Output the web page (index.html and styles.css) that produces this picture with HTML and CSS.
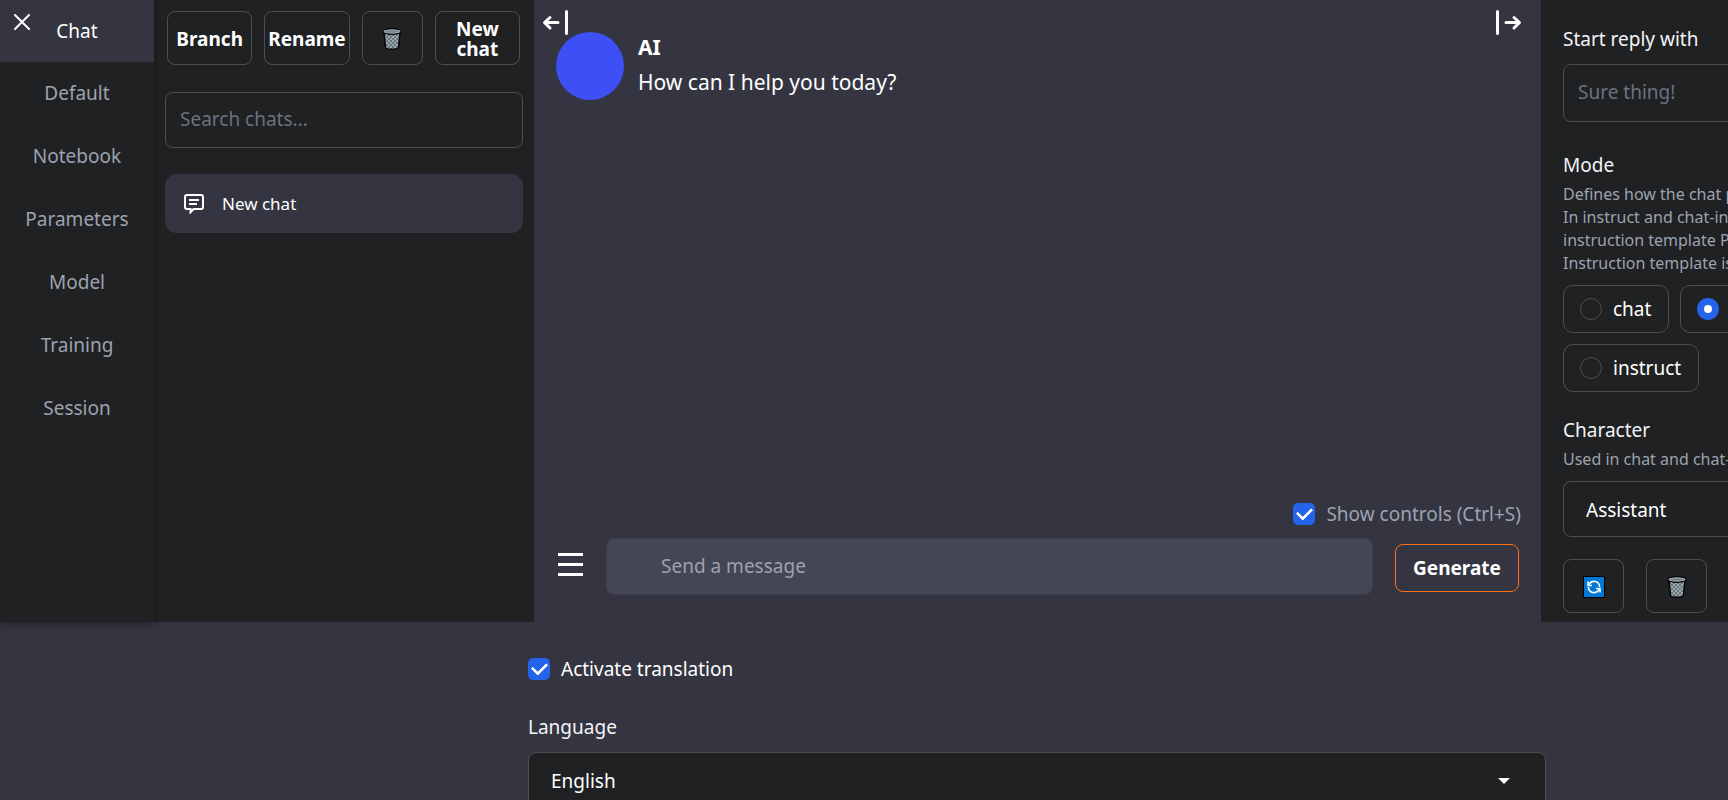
FILE: index.html
```
<!DOCTYPE html>
<html lang="en">
<head>
  <meta charset="UTF-8">
  <title>Text generation web UI</title>
  <meta name="viewport" content="width=device-width, initial-scale=1">
  <link rel="stylesheet" href="styles.css">
</head>
<body>

  <div class="app">
    <nav class="tabs">
      <button class="tab active">Chat</button>
      <button class="tab">Default</button>
      <button class="tab">Notebook</button>
      <button class="tab">Parameters</button>
      <button class="tab">Model</button>
      <button class="tab">Training</button>
      <button class="tab">Session</button>
      <button class="close-nav" aria-label="Close navigation">
        <svg width="16" height="16" viewBox="0 0 16 16"><path d="M1 1l14 14M15 1L1 15"/></svg>
      </button>
    </nav>

    <aside class="past-chats">
      <div class="chat-actions">
        <button class="btn">Branch</button>
        <button class="btn">Rename</button>
        <button class="btn btn-icon" aria-label="Delete chat">
          <svg class="trash" width="20" height="22" viewBox="0 0 20 22"><use href="#trash"/></svg>
        </button>
        <button class="btn">New chat</button>
      </div>
      <input class="field search" type="text" placeholder="Search chats..." aria-label="Search chats">
      <a class="chat-item" href="#">
        <svg width="20" height="20" viewBox="0 0 20 20"><path d="M3 1h14a2 2 0 0 1 2 2v10a2 2 0 0 1-2 2H9.500l-3 3.300V15H3a2 2 0 0 1-2-2V3a2 2 0 0 1 2-2zM5 6h10M5 10h8"/></svg>
        New chat
      </a>
    </aside>

    <main class="chat">
      <button class="toggle toggle-left" aria-label="Hide past chats">
        <svg width="26" height="26" viewBox="0 0 26 26"><path d="M16 12.500H3M8 7.500l-5.500 5 5.500 5.500M24.500 1.500v22"/></svg>
      </button>
      <button class="toggle toggle-right" aria-label="Hide controls">
        <svg width="26" height="26" viewBox="0 0 26 26"><path d="M10 12.500h13M18 7.500l5.500 5-5.500 5.500M1.500 1.500v22"/></svg>
      </button>

      <div class="message">
        <div class="avatar"></div>
        <div class="message-text">
          <div class="name">AI</div>
          <p>How can I help you today?</p>
        </div>
      </div>

      <label class="check show-controls">
        <input type="checkbox" checked>
        Show controls (Ctrl+S)
      </label>
      <div class="composer">
        <button class="menu" aria-label="Menu"><span></span><span></span><span></span></button>
        <textarea rows="1" placeholder="Send a message" aria-label="Message"></textarea>
        <button class="btn generate">Generate</button>
      </div>
    </main>

    <aside class="controls">
      <div class="controls-inner">
        <label class="title" for="start-with">Start reply with</label>
        <input class="field start-with" id="start-with" type="text" placeholder="Sure thing!">

        <div class="title">Mode</div>
        <p class="info">
          Defines how the chat prompt is generated.<br>
          In instruct and chat-instruct modes, the<br>
          instruction template Parameters &gt;<br>
          Instruction template is used.
        </p>
        <div class="modes">
          <label><input type="radio" name="mode">chat</label>
          <label><input type="radio" name="mode" checked>chat-instruct</label>
          <label><input type="radio" name="mode">instruct</label>
        </div>

        <label class="title" for="character">Character</label>
        <p class="info">Used in chat and chat-instruct modes.</p>
        <select class="field" id="character">
          <option>Assistant</option>
        </select>
        <div class="character-actions">
          <button class="btn btn-icon" aria-label="Refresh">
            <svg width="22" height="22" viewBox="0 0 22 22">
              <rect width="22" height="22" rx="1" fill="#000"/>
              <rect x="1" y="1" width="20" height="20" fill="#0078d7"/>
              <path d="M6 8.500A5.600 5.600 0 0 1 16.600 11M16 13.500A5.600 5.600 0 0 1 5.400 11M5 5.500v4h4M17 16.500v-4h-4" fill="none" stroke="#fff" stroke-width="1.600"/>
            </svg>
          </button>
          <button class="btn btn-icon" aria-label="Delete character">
            <svg class="trash" width="20" height="22" viewBox="0 0 20 22"><use href="#trash"/></svg>
          </button>
        </div>
      </div>
    </aside>
  </div>

  <section class="translation">
    <label class="check">
      <input type="checkbox" checked>
      Activate translation
    </label>
    <label class="title" for="language">Language</label>
    <div class="select-wrap">
      <select class="field" id="language">
        <option>English</option>
      </select>
    </div>
  </section>

  <svg width="0" height="0" class="defs">
    <defs>
      <pattern id="mesh" width="4" height="4" patternUnits="userSpaceOnUse">
        <rect width="4" height="4" fill="#9aa7ae"/>
        <path d="M0 0h2v2H0zM2 2h2v2H2z" fill="#69757b"/>
      </pattern>
      <symbol id="trash" viewBox="0 0 20 22">
        <path d="M2 4l1.500 15c.2 1.500 2 2.300 6.500 2.300s6.300-.8 6.500-2.300L18 4z" fill="url(#mesh)" stroke="#000" stroke-width="1.400"/>
        <ellipse cx="10" cy="3.500" rx="9.200" ry="2.800" fill="#a9b5bb" stroke="#000" stroke-width="1.200"/>
        <ellipse cx="10" cy="3.500" rx="7" ry="1.300" fill="#77848b"/>
      </symbol>
    </defs>
  </svg>

</body>
</html>
```

FILE: styles.css
```
* {
  box-sizing: border-box;
}

html {
  scrollbar-width: none;
}

body {
  margin: 0;
  min-height: 100vh;
  background: #343541;
  color: #fff;
  font: 19px/28px "Noto Sans", sans-serif;
  overflow-x: hidden;
}

button,
input,
select,
textarea {
  font: inherit;
  color: inherit;
}

button {
  padding: 0;
  border: 0;
  background: none;
  cursor: pointer;
}

svg {
  display: block;
}

p {
  margin: 0;
}

.app {
  display: flex;
  height: 622px;
}

/* navigation */

.tabs {
  position: relative;
  z-index: 1;
  flex: 0 0 154px;
  display: flex;
  flex-direction: column;
  background: #202123;
  box-shadow: 0 2px 6px rgba(0, 0, 0, .4);
}

.tab {
  height: 63px;
  padding-bottom: 1px;
  color: #9ca3af;
}

.tab.active {
  height: 62px;
  padding: 0;
  background: #343541;
  color: #fff;
}

.close-nav {
  position: absolute;
  top: 14px;
  left: 14px;
}

.close-nav svg {
  fill: none;
  stroke: #fff;
  stroke-width: 2;
  stroke-linecap: round;
}

/* past chats */

.past-chats {
  flex: 0 0 380px;
  padding: 11px;
  background: #202123;
}

.chat-actions {
  display: flex;
  gap: 12px;
  padding: 0 3px 0 2px;
}

.btn {
  display: flex;
  align-items: center;
  justify-content: center;
  flex: 1 1 0;
  min-width: 0;
  height: 54px;
  padding-top: 2px;
  border: 1px solid #4d4e50;
  border-radius: 8px;
  font-weight: 700;
  line-height: 20px;
}

.btn-icon {
  flex: 0 0 61px;
}

.field {
  display: block;
  width: 100%;
  height: 56px;
  padding: 0 14px 2px;
  border: 1px solid #4d4e50;
  border-radius: 8px;
  background: #202123;
}

.field::placeholder {
  color: #6b7280;
}

.search {
  margin: 27px 0 26px;
}

.chat-item {
  display: flex;
  align-items: center;
  gap: 18px;
  height: 59px;
  padding: 0 19px;
  border-radius: 12px;
  background: #343541;
  color: #fff;
  font-size: 17px;
  text-decoration: none;
}

.chat-item svg {
  fill: none;
  stroke: #fff;
  stroke-width: 2;
}

/* chat */

.chat {
  position: relative;
  flex: 1;
  min-width: 0;
  display: flex;
  flex-direction: column;
  padding: 32px 20px 27px 22px;
}

.toggle {
  position: absolute;
  top: 10px;
}

.toggle-left {
  left: 8px;
}

.toggle-right {
  right: 19px;
}

.toggle svg {
  fill: none;
  stroke: #fff;
  stroke-width: 3;
  stroke-linecap: round;
  stroke-linejoin: round;
}

.message {
  display: flex;
  gap: 14px;
  margin-bottom: auto;
  font-size: 21px;
}

.message-text {
  padding-top: 1px;
}

.avatar {
  width: 68px;
  height: 68px;
  border-radius: 50%;
  background: #3c50f5;
}

.name {
  margin-bottom: 7px;
  font-weight: 700;
}

.check {
  display: flex;
  align-items: center;
  gap: 11px;
}

.check input {
  appearance: none;
  display: flex;
  align-items: center;
  justify-content: center;
  width: 22px;
  height: 22px;
  margin: 0;
  border-radius: 5px;
  background: #2563eb;
}

.check input:checked::before {
  content: "";
  width: 12px;
  height: 7px;
  margin-bottom: 4px;
  border: solid #fff;
  border-width: 0 0 3px 3px;
  border-radius: 1px;
  transform: rotate(-45deg);
}

.show-controls {
  align-self: flex-end;
  margin-bottom: 10px;
  color: #9ca3af;
}

.composer {
  display: flex;
  align-items: center;
}

.menu {
  display: grid;
  gap: 7px;
  width: 25px;
  margin: 0 23px 5px 2px;
}

.menu span {
  height: 3px;
  background: #fff;
}

.composer textarea {
  flex: 1;
  min-width: 0;
  height: 57px;
  padding: 13px 54px;
  border: 1px solid #3c3d49;
  border-radius: 8px;
  background: #444654;
  resize: none;
}

.composer textarea::placeholder {
  color: #9ca3af;
}

.generate {
  flex: 0 0 124px;
  height: 48px;
  margin: 2px 2px 0 22px;
  padding: 0;
  border-color: #f97316;
}

/* controls on the right */

.controls {
  flex: 0 0 187px;
  overflow: hidden;
  background: #202123;
}

.controls-inner {
  width: 424px;
  padding: 25px 22px 0;
}

.title {
  display: block;
  color: #f3f4f6;
}

.start-with {
  height: 58px;
  margin: 11px 0 29px;
}

.info {
  margin-top: 4px;
  color: #9ca3af;
  font-size: 16px;
  line-height: 23px;
}

.modes {
  display: flex;
  flex-wrap: wrap;
  gap: 11px;
  margin: 10px 0 24px;
}

.modes label {
  display: flex;
  align-items: center;
  gap: 11px;
  height: 48px;
  padding: 0 17px 0 16px;
  border: 1px solid #4d4e50;
  border-radius: 10px;
}

.modes input {
  appearance: none;
  width: 22px;
  height: 22px;
  margin: 0;
  border: 1px solid #4d4e50;
  border-radius: 50%;
}

.modes input:checked {
  border: 7px solid #2563eb;
  background: #fff;
}

select.field {
  appearance: none;
  padding: 1px 22px 0;
}

#character {
  margin: 10px 0 22px;
}

.character-actions {
  display: flex;
  gap: 22px;
}

/* translation */

.translation {
  margin: 0 182px 0 528px;
  padding-top: 33px;
}

.translation .title {
  margin: 30px 0 11px;
}

.select-wrap {
  position: relative;
}

.select-wrap::after {
  content: "";
  position: absolute;
  top: 26px;
  right: 36px;
  border: solid transparent;
  border-width: 6px 6px 0;
  border-top-color: #fff;
}

.defs {
  position: absolute;
}
```
